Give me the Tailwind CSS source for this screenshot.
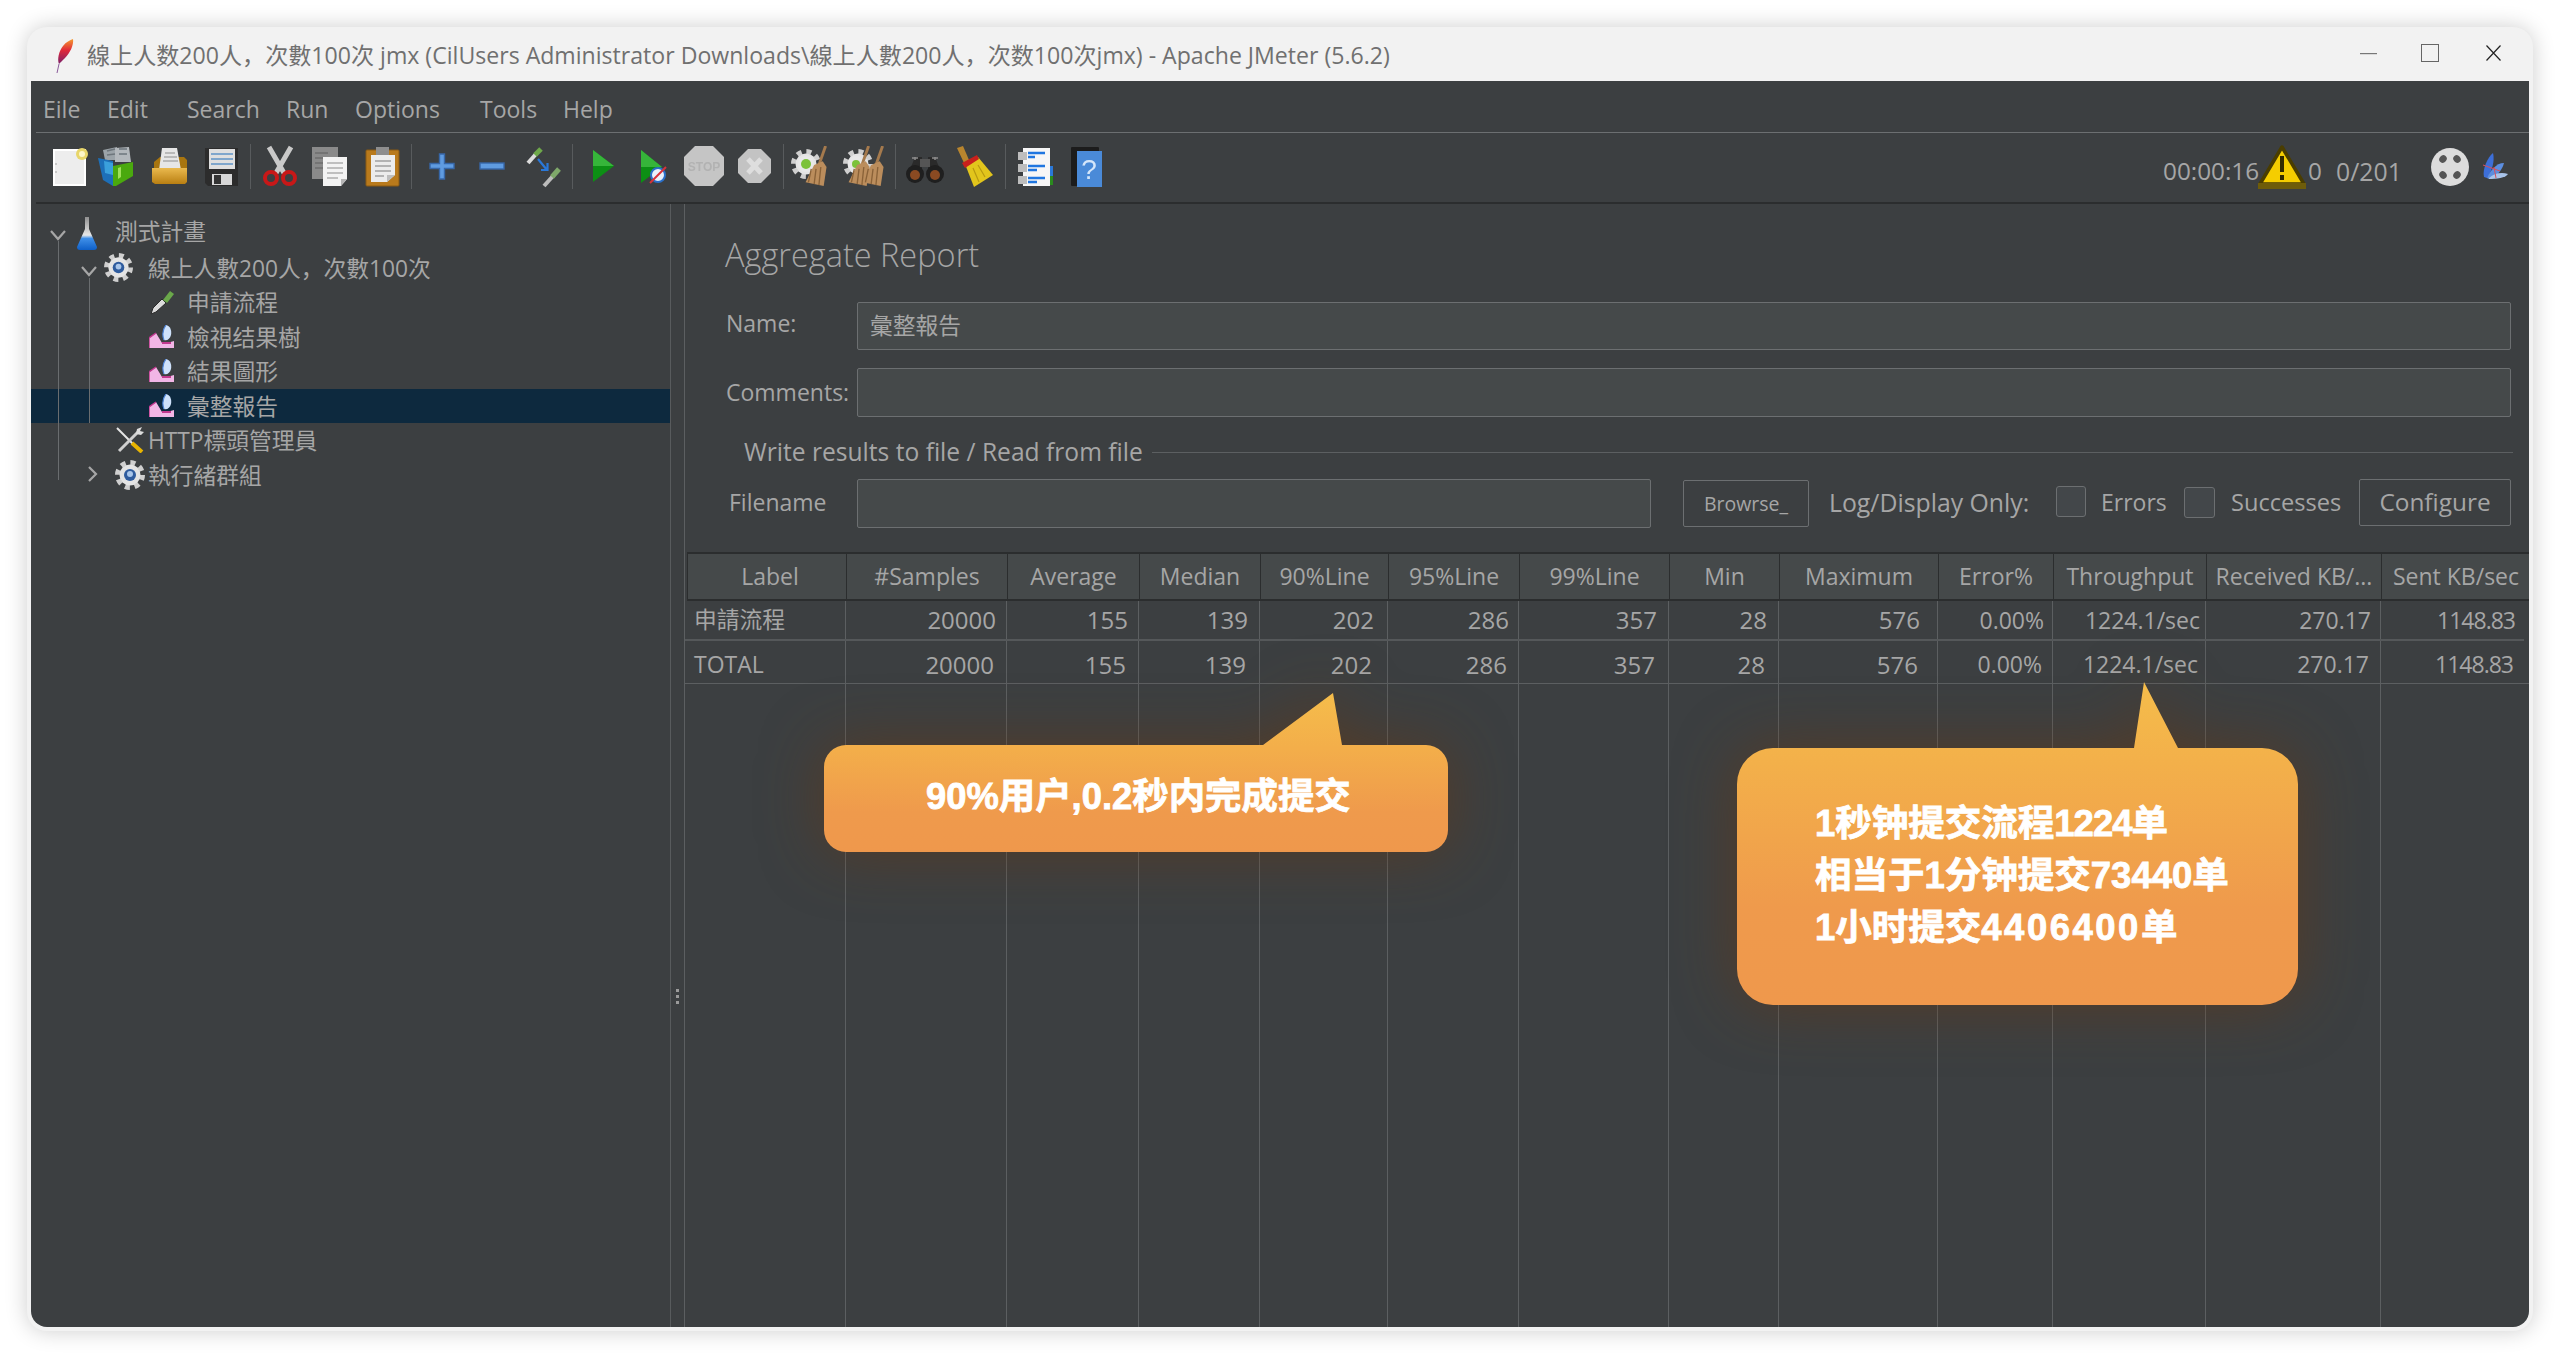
<!DOCTYPE html>
<html lang="zh-Hans">
<head>
  <meta charset="UTF-8">
  <title>Apache JMeter</title>
  <script src="https://cdn.jsdelivr.net/npm/@tailwindcss/browser@4"></script>
</head>
<body class="relative w-[2560px] h-[1360px] overflow-hidden bg-white font-['Open_Sans','Noto_Sans_CJK_SC',sans-serif]">

  <!-- shared icons -->
  <svg class="absolute w-0 h-0">
    <symbol id="gear" viewBox="0 0 30 30">
      <circle cx="15" cy="15" r="12.5" fill="none" stroke="#cfcfcf" stroke-width="5" stroke-dasharray="5 4.82"/>
      <circle cx="15" cy="15" r="10.5" fill="#e4e4e4"/>
      <circle cx="15" cy="15" r="6" fill="#2f5c9e"/>
      <circle cx="15" cy="14" r="3" fill="#a9c6ea"/>
    </symbol>
    <symbol id="chart" viewBox="0 0 25 24">
      <path d="M0 23V13L7 8L10 13L13 18H18L25 16V23Z" fill="#f2b6e6"/>
      <path d="M0 23V13L7 8" fill="none" stroke="#c2388f" stroke-width="1.5"/>
      <path d="M13 18H22" stroke="#c2388f" stroke-width="2"/>
      <path d="M17 0C21 1 23 5 22 10C21 14 18 16 15 15C13 10 14 4 17 0Z" fill="#cfe2fb"/>
      <path d="M17 0C14 4 13 10 15 15" fill="none" stroke="#4d84d8" stroke-width="1.2"/>
    </symbol>
    <symbol id="broom" viewBox="0 0 24 44">
      <path d="M21 0L14 20" stroke="#a57a4d" stroke-width="3"/>
      <path d="M9 20L18 16L22 22L19 42L0 38Z" fill="#bb8d5c"/>
      <path d="M6 24L3 38M11 24L9 40M16 22L14 41" stroke="#8a6238" stroke-width="1.4"/>
    </symbol>
    <linearGradient id="call1" gradientUnits="userSpaceOnUse" x1="0" y1="0" x2="0" y2="159">
      <stop offset="0" stop-color="#f5bd4b"/><stop offset="0.35" stop-color="#f3ae4a"/><stop offset="0.75" stop-color="#ef9a4c"/><stop offset="1" stop-color="#ef984c"/>
    </linearGradient>
    <linearGradient id="call2" gradientUnits="userSpaceOnUse" x1="0" y1="0" x2="0" y2="323">
      <stop offset="0" stop-color="#f5bd4b"/><stop offset="0.25" stop-color="#f3b04a"/><stop offset="0.7" stop-color="#ef9a4c"/><stop offset="1" stop-color="#ef984c"/>
    </linearGradient>
    <linearGradient id="plume" x1="0" y1="0" x2="0" y2="1">
      <stop offset="0" stop-color="#f59a2e"/><stop offset="0.45" stop-color="#e0293a"/><stop offset="1" stop-color="#7a1f6a"/>
    </linearGradient>
    <linearGradient id="folder" x1="0" y1="0" x2="0" y2="1">
      <stop offset="0" stop-color="#eab94e"/><stop offset="1" stop-color="#b97f12"/>
    </linearGradient>
    <linearGradient id="flask" x1="0" y1="0" x2="0" y2="1">
      <stop offset="0" stop-color="#8f8f8f"/><stop offset="0.55" stop-color="#e8e8e8"/><stop offset="0.65" stop-color="#3f8fe8"/><stop offset="1" stop-color="#0e5fc8"/>
    </linearGradient>
  </svg>

  <!-- window -->
  <div class="absolute left-[27px] top-[27px] w-[2506px] h-[1304px] rounded-[20px] bg-[#f2f2f2] px-[4px] pb-[4px] shadow-[0_0_22px_rgba(0,0,0,0.2)] flex flex-col">

    <!-- title bar -->
    <div class="h-[54px] shrink-0 flex items-center pl-[25px] pr-[28px] pt-[3px] text-[23.1px] text-[#707070] whitespace-nowrap">
      <svg class="w-[18px] h-[34px] shrink-0" viewBox="0 0 18 34">
        <path d="M17 0C18 6 14 14 9 19C6 22 4 24 3 25C1 20 3 12 7 7C10 3 14 1 17 0Z" fill="url(#plume)"/>
        <path d="M3 25L1 34" stroke="#8a5a9a" stroke-width="1"/>
      </svg>
      <span class="ml-[13px]">線上人数200人，次數100次 jmx (CilUsers Administrator Downloads\線上人數200人，次数100次jmx) - Apache JMeter (5.6.2)</span>
      <svg class="ml-auto -mt-[3px] w-[17px] h-[2px]" viewBox="0 0 17 2"><rect width="17" height="1.2" fill="#777"/></svg>
      <svg class="ml-[44px] -mt-[6px] w-[18px] h-[18px]" viewBox="0 0 18 18"><rect x="0.5" y="0.5" width="17" height="17" fill="none" stroke="#666" stroke-width="1"/></svg>
      <svg class="ml-[47px] -mt-[6px] w-[15px] h-[16px]" viewBox="0 0 15 16"><path d="M0.5 0.5L14.5 15.5M14.5 0.5L0.5 15.5" stroke="#222" stroke-width="1.2"/></svg>
    </div>

    <!-- dark body -->
    <div class="flex-1 min-h-0 bg-[#3c3f41] rounded-b-[16px] flex flex-col text-[#a6a6a6] text-[23px]">

      <!-- menu -->
      <div class="h-[52px] shrink-0 ml-[5px] pl-[7px] pt-[5px] flex items-center border-b border-[#6c6f71] whitespace-nowrap">
        <span class="w-[64px]">Eile</span>
        <span class="w-[80px]">Edit</span>
        <span class="w-[99px]">Search</span>
        <span class="w-[69px]">Run</span>
        <span class="w-[125px]">Options</span>
        <span class="w-[83px]">Tools</span>
        <span>Help</span>
      </div>

      <!-- toolbar -->
      <div class="h-[71px] shrink-0 ml-[5px] pl-[11px] pr-[21px] pt-[11px] flex items-start border-b-2 border-[#2b2d2e] [&>svg]:blur-[0.5px] [&>div>svg]:blur-[0.5px]">
        <svg class="w-[44px] h-[44px]" viewBox="0 0 44 44">
          <rect x="7" y="6" width="31" height="35" fill="#ededed" stroke="#fff" stroke-width="2"/>
          <circle cx="9" cy="20" r="0.8" fill="#999"/><circle cx="9" cy="28" r="0.8" fill="#999"/>
          <circle cx="35" cy="10" r="6" fill="#e8d66a"/><circle cx="35" cy="10" r="3" fill="#fdf6c8"/>
        </svg>
        <svg class="ml-[4px] w-[44px] h-[44px]" viewBox="0 0 44 44">
          <path d="M8 6L22 3V16L10 16Z" fill="#9ba3a8"/><path d="M20 4L34 3L36 18L20 18Z" fill="#b3b8bc"/>
          <path d="M12 7L20 5M24 5L32 5M12 11L20 10M24 10L32 10" stroke="#6e767c" stroke-width="1.6"/>
          <path d="M3 14L18 17V42L8 36Z" fill="#1d6fb8"/><path d="M9 17L18 19V31L10 29Z" fill="#3aa0dc"/>
          <path d="M18 22L38 18V32L21 42H18Z" fill="#4aa90e"/><path d="M23 24L26 23V33L23 35Z" fill="#9fe05a"/>
        </svg>
        <svg class="ml-[9px] w-[44px] h-[44px]" viewBox="0 0 44 44">
          <path d="M6 18L12 13H36L39 16V30H6Z" fill="#a8750f"/>
          <path d="M14 4H29L33 26H11Z" fill="#e6e6e6"/><path d="M17 9H27M16 13H29M15 17H30" stroke="#aaa" stroke-width="1.4"/>
          <path d="M4 24H39V38L37 40H7L4 38Z" fill="url(#folder)"/>
        </svg>
        <svg class="ml-[7px] w-[44px] h-[44px]" viewBox="0 0 44 44">
          <path d="M6 4H39V42H9L6 39Z" fill="#2c2c2c"/>
          <rect x="10" y="5" width="26" height="20" fill="#dfdfdf"/>
          <path d="M12 10H34M12 15H34M12 20H34" stroke="#7fa6cc" stroke-width="2"/>
          <rect x="13" y="30" width="20" height="11" fill="#d8d8d8"/><rect x="15" y="31" width="7" height="9" fill="#333"/>
        </svg>
        <div class="ml-[7px] w-[1px] h-[45px] bg-[#585b5d]"></div>
        <svg class="ml-[7px] w-[44px] h-[44px]" viewBox="0 0 44 44">
          <path d="M11 3L26 29M33 3L18 29" stroke="#c9c9c9" stroke-width="5"/>
          <circle cx="13" cy="34" r="6" fill="none" stroke="#c81818" stroke-width="4"/>
          <circle cx="31" cy="34" r="6" fill="none" stroke="#c81818" stroke-width="4"/>
        </svg>
        <svg class="ml-[6px] w-[44px] h-[44px]" viewBox="0 0 44 44">
          <rect x="4" y="3" width="26" height="32" fill="#8a8a8a"/>
          <path d="M7 9H20M7 14H20M7 19H20M7 24H20" stroke="#6e6e6e" stroke-width="1.5"/>
          <path d="M15 13H39V35L33 42H15Z" fill="#f3f3f3"/>
          <path d="M19 19H35M19 24H35M19 29H35M19 34H30" stroke="#aeaeae" stroke-width="1.5"/>
          <path d="M33 42V35H39Z" fill="#b5b5b5"/>
        </svg>
        <svg class="ml-[8px] w-[44px] h-[44px]" viewBox="0 0 44 44">
          <rect x="6" y="6" width="33" height="36" rx="1" fill="#b97a1c" stroke="#8b5a12"/>
          <path d="M11 11H35V31L27 38H11Z" fill="#ececec"/>
          <path d="M15 17H31M15 22H31M15 27H31M15 32H24" stroke="#a0a0a0" stroke-width="1.5"/>
          <path d="M27 38V31H35Z" fill="#bdbdbd"/>
          <rect x="16" y="3" width="13" height="8" fill="#8e8e8e"/>
        </svg>
        <div class="ml-[7px] w-[1px] h-[45px] bg-[#585b5d]"></div>
        <svg class="ml-[8px] w-[44px] h-[44px]" viewBox="0 0 44 44">
          <path d="M19.5 10H24.5V19.5H34V24.5H24.5V35H19.5V24.5H10V19.5H19.5Z" fill="#5f9be0" stroke="#3767a8" stroke-width="1.4"/>
        </svg>
        <svg class="ml-[6px] w-[44px] h-[44px]" viewBox="0 0 44 44">
          <rect x="10" y="19" width="24" height="6" fill="#5f9be0" stroke="#3767a8" stroke-width="1.4"/>
        </svg>
        <svg class="ml-[6px] w-[44px] h-[44px]" viewBox="0 0 44 44">
          <path d="M8 19L16 10" stroke="#dcdcdc" stroke-width="4"/><path d="M15 11L21 5" stroke="#6ea84a" stroke-width="5"/>
          <path d="M18 15L27 26M21 26H27.5V19" fill="none" stroke="#2a78d8" stroke-width="2.2"/>
          <path d="M24 42L33 32" stroke="#bcbcbc" stroke-width="4"/><path d="M32 33L39 25" stroke="#7fa86a" stroke-width="5"/>
        </svg>
        <div class="ml-[8px] w-[1px] h-[45px] bg-[#585b5d]"></div>
        <svg class="ml-[8px] w-[44px] h-[44px]" viewBox="0 0 44 44">
          <path d="M12 6L33 22L12 38Z" fill="#0c8f14"/><path d="M12 6L33 22H12Z" fill="#36b53a"/>
        </svg>
        <svg class="ml-[7px] w-[44px] h-[44px]" viewBox="0 0 44 44">
          <path d="M9 6L30 23L9 39Z" fill="#0c8f14"/><path d="M9 6L30 23H9Z" fill="#36b53a"/>
          <circle cx="26" cy="31" r="7" fill="#e8f1fb" stroke="#2a6fc8" stroke-width="2"/>
          <path d="M18 39L34 23" stroke="#d8323a" stroke-width="2"/>
        </svg>
        <svg class="ml-[5px] w-[44px] h-[44px]" viewBox="0 0 44 44">
          <path d="M14 2H32L43 13V31L32 42H14L3 31V13Z" fill="#c5c5c5"/>
          <text x="23" y="27" text-anchor="middle" font-family="Liberation Sans" font-weight="700" font-size="12" fill="#b2b2b2">STOP</text>
        </svg>
        <svg class="ml-[7px] w-[44px] h-[44px]" viewBox="0 0 44 44">
          <path d="M16 5H29L39 15V29L29 39H16L6 29V15Z" fill="#c3c3c3"/>
          <path d="M16 15L29 29M29 15L16 29" stroke="#dedede" stroke-width="5"/>
        </svg>
        <div class="ml-[7px] w-[1px] h-[45px] bg-[#585b5d]"></div>
        <svg class="ml-[6px] w-[44px] h-[44px]" viewBox="0 0 44 44">
          <use href="#gear" x="1" y="5" width="30" height="30"/>
          <circle cx="16" cy="20" r="8" fill="#e8e8e8"/><circle cx="16" cy="20" r="5" fill="#7cc23a"/>
          <use href="#broom" x="15" y="2" width="24" height="42"/>
        </svg>
        <svg class="ml-[8px] w-[44px] h-[44px]" viewBox="0 0 44 44">
          <use href="#gear" x="1" y="5" width="30" height="30"/>
          <circle cx="14" cy="20" r="8" fill="#e8e8e8"/><circle cx="14" cy="20" r="4" fill="#7cc23a"/>
          <use href="#broom" x="6" y="2" width="24" height="42"/>
          <use href="#broom" x="20" y="2" width="24" height="42"/>
        </svg>
        <div class="ml-[9px] w-[1px] h-[45px] bg-[#585b5d]"></div>
        <svg class="ml-[7px] w-[44px] h-[44px]" viewBox="0 0 44 44">
          <path d="M6 28L12 13H19V28ZM25 28V13H32L38 28Z" fill="#2a2a2a"/><rect x="17" y="15" width="10" height="8" fill="#555"/>
          <circle cx="12" cy="30" r="9" fill="#1f1f1f"/><circle cx="32" cy="30" r="9" fill="#1f1f1f"/>
          <circle cx="12" cy="31" r="5" fill="#8a4a22"/><circle cx="32" cy="31" r="5" fill="#8a4a22"/>
          <path d="M12 13V16M32 13V16M9 14H15M29 14H35" stroke="#8c8c8c" stroke-width="1.5"/>
        </svg>
        <svg class="ml-[5px] w-[44px] h-[44px]" viewBox="0 0 44 44">
          <path d="M5 4L11 2L17 16L12 19Z" fill="#b8852e"/>
          <path d="M13 20L26 13L41 31L22 43Z" fill="#e2c51c"/>
          <path d="M21 24L27 38M26 21L33 33" stroke="#b89a10" stroke-width="1.2"/>
          <path d="M10 19L25 11L27 15L13 24Z" fill="#c8201c"/>
        </svg>
        <div class="ml-[9px] w-[1px] h-[45px] bg-[#585b5d]"></div>
        <svg class="ml-[7px] w-[44px] h-[44px]" viewBox="0 0 44 44">
          <rect x="36" y="22" width="4" height="10" fill="#2a78d8"/><rect x="36" y="32" width="4" height="9" fill="#2a8a1e"/>
          <rect x="10" y="4" width="27" height="38" fill="#f6f6f6"/>
          <path d="M15 9H32M15 13H22M15 22H32M15 26H24M15 34H32M15 38H24" stroke="#1f76e0" stroke-width="2.4"/>
          <rect x="5" y="8" width="9" height="8" fill="#bdbdbd"/><rect x="5" y="20" width="9" height="8" fill="#bdbdbd"/><rect x="5" y="32" width="9" height="8" fill="#bdbdbd"/>
        </svg>
        <svg class="ml-[7px] w-[44px] h-[44px]" viewBox="0 0 44 44">
          <rect x="7" y="3" width="28" height="39" rx="1" fill="#1c1c1c"/>
          <rect x="13" y="7" width="25" height="36" fill="#4a8ad8"/>
          <text x="25" y="35" text-anchor="middle" font-family="Liberation Sans" font-size="28" fill="#d5e6fa">?</text>
        </svg>

        <!-- status -->
        <div class="ml-auto flex items-start">
          <span class="mt-[9px] w-[94px] text-[24.3px]">00:00:16</span>
          <svg class="w-[50px] h-[46px]" viewBox="0 0 50 46">
            <path d="M25 3L47 40H3Z" fill="#f5cd00" stroke="#4a3d00" stroke-width="3.5" stroke-linejoin="round"/>
            <rect x="1" y="39" width="48" height="6" fill="#6e5c0a"/>
            <path d="M25 12V28" stroke="#332b00" stroke-width="4"/><rect x="23" y="31" width="4" height="5" fill="#332b00"/>
          </svg>
          <span class="mt-[9px] ml-[1px] w-[28px] text-[24.3px]">0</span>
          <span class="mt-[9px] w-[94px] text-[24.8px]">0/201</span>
          <svg class="w-[40px] h-[40px] mt-[3px]" viewBox="0 0 40 40">
            <circle cx="20" cy="20" r="19" fill="#dcdcdc"/>
            <ellipse cx="13" cy="12" rx="3.5" ry="4" fill="#555" transform="rotate(40 13 12)"/><ellipse cx="27" cy="12" rx="3.5" ry="4" fill="#555" transform="rotate(-40 27 12)"/>
            <ellipse cx="13" cy="28" rx="3.5" ry="4" fill="#555" transform="rotate(-40 13 28)"/><ellipse cx="27" cy="28" rx="3.5" ry="4" fill="#555" transform="rotate(40 27 28)"/>
          </svg>
          <svg class="ml-[12px] w-[26px] h-[26px] mt-[9px]" viewBox="0 0 26 26">
            <path d="M2 24C0 16 6 4 11 0C13 8 10 18 5 25Z" fill="#3d6fd8"/>
            <path d="M5 25C8 18 14 10 22 10C20 18 14 24 7 26Z" fill="#5c8ee0"/>
            <path d="M7 25C12 20 20 19 26 21C24 25 14 26 7 26Z" fill="#a9c4ea"/>
            <path d="M1 12L18 18M12 14L14 25" stroke="#d8505a" stroke-width="1"/>
          </svg>
        </div>
      </div>

      <!-- main -->
      <div class="flex-1 min-h-0 flex">
        <!-- tree -->
        <div class="relative w-[640px] shrink-0 border-r border-[#585b5d] pt-[12px] [&_svg]:shrink-0 [&_span]:mt-[2px] whitespace-nowrap text-[22.75px]">
          <div class="absolute left-[26.5px] top-[37px] h-[239px] w-px bg-[#6a6d6f]"></div>
          <div class="absolute left-[58px] top-[74px] h-[145px] w-px bg-[#6a6d6f]"></div>

          <div class="h-[34.5px] pl-[19px] flex items-center">
            <svg class="w-[16px] h-[12px] mt-[4px]" viewBox="0 0 16 12"><path d="M1 2L8 10L15 2" fill="none" stroke="#a6a6a6" stroke-width="2.2"/></svg>
            <svg class="ml-[11px] w-[20px] h-[33px]" viewBox="0 0 20 33"><path d="M8 0H12V12L20 30C20 32 19 33 17 33H3C1 33 0 32 0 30L8 12Z" fill="url(#flask)"/></svg>
            <span class="ml-[18px] !-mt-[2px]">測式計畫</span>
          </div>
          <div class="h-[34.5px] pl-[50px] flex items-center">
            <svg class="w-[16px] h-[12px] mt-[6px]" viewBox="0 0 16 12"><path d="M1 2L8 10L15 2" fill="none" stroke="#a6a6a6" stroke-width="2.2"/></svg>
            <svg class="ml-[7px] w-[29px] h-[29px]"><use href="#gear"/></svg>
            <span class="ml-[15px]">線上人數200人，次數100次</span>
          </div>
          <div class="h-[34.5px] pl-[118px] flex items-center">
            <svg class="w-[25px] h-[25px]" viewBox="0 0 25 25">
              <path d="M2 24L4 18L13 9L17 13L7 22Z" fill="#dcdcdc" stroke="#2a2a2a" stroke-width="1"/>
              <path d="M14 10L21 1L25 4L18 13Z" fill="#6aa84a"/>
            </svg>
            <span class="ml-[13px]">申請流程</span>
          </div>
          <div class="h-[34.5px] pl-[118px] flex items-center">
            <svg class="w-[25px] h-[24px]"><use href="#chart"/></svg>
            <span class="ml-[13px]">檢視结果樹</span>
          </div>
          <div class="h-[34.5px] pl-[118px] flex items-center">
            <svg class="w-[25px] h-[24px]"><use href="#chart"/></svg>
            <span class="ml-[13px]">結果圖形</span>
          </div>
          <div class="h-[34.5px] pl-[118px] flex items-center bg-[#0d293e]">
            <svg class="w-[25px] h-[24px]"><use href="#chart"/></svg>
            <span class="ml-[13px]">彙整報告</span>
          </div>
          <div class="h-[34.5px] pl-[85px] flex items-center">
            <svg class="w-[28px] h-[26px]" viewBox="0 0 28 26">
              <path d="M1 1L25 25" stroke="#e6e6e6" stroke-width="2"/><path d="M16 16L26 25" stroke="#e8b400" stroke-width="4"/>
              <path d="M3 24L22 5" stroke="#cfcfcf" stroke-width="3"/>
              <path d="M20 7L21 2L26 0L24 4L28 5L25 8Z" fill="#dcdcdc"/>
            </svg>
            <span class="ml-[4px]">HTTP標頭管理員</span>
          </div>
          <div class="h-[34.5px] pl-[53px] flex items-center">
            <svg class="w-[16px] h-[18px] -mt-[2px]" viewBox="0 0 16 18"><path d="M5 2L12 9L5 16" fill="none" stroke="#a6a6a6" stroke-width="2.2"/></svg>
            <svg class="ml-[15px] w-[30px] h-[30px]"><use href="#gear"/></svg>
            <span class="ml-[3px]">執行緒群組</span>
          </div>
        </div>

        <!-- splitter -->
        <div class="w-[13px] shrink-0 flex flex-col items-center pt-[785px] gap-[3px]">
          <div class="w-[3px] h-[3px] bg-[#9a9a9a]"></div>
          <div class="w-[3px] h-[3px] bg-[#9a9a9a]"></div>
          <div class="w-[3px] h-[3px] bg-[#9a9a9a]"></div>
        </div>

        <!-- report panel -->
        <div class="flex-1 min-w-0 flex flex-col border-l border-[#5c5f61] whitespace-nowrap">
          <div class="h-[40px] mt-[31px] ml-[40px] flex items-center text-[32.5px] font-light">Aggregate Report</div>

          <div class="mt-[27px] h-[48px] pl-[41px] pr-[18px] flex">
            <span class="w-[131px] flex items-center -mt-[6px]">Name:</span>
            <div class="flex-1 px-[12px] flex items-center bg-[#45494a] border border-[#6c6f71] rounded-[2px] text-[22.75px]">彙整報告</div>
          </div>
          <div class="mt-[18px] h-[49px] pl-[41px] pr-[18px] flex">
            <span class="w-[131px] flex items-center">Comments:</span>
            <div class="flex-1 bg-[#45494a] border border-[#6c6f71] rounded-[2px]"></div>
          </div>

          <div class="mt-[18px] h-[34px] pl-[59px] pr-[16px] flex items-center">
            <span class="text-[24.6px]">Write results to file / Read from file</span>
            <div class="flex-1 ml-[9px] h-px bg-[#5c5f61]"></div>
          </div>

          <div class="mt-[10px] h-[49px] pl-[44px] flex items-start">
            <span class="w-[128px] h-[47px] flex items-center">Filename</span>
            <div class="w-[794px] h-[49px] bg-[#45494a] border border-[#6c6f71] rounded-[2px]"></div>
            <div class="ml-[32px] mt-[1px] w-[126px] h-[47px] flex items-center justify-center border border-[#6c6f71] rounded-[2px] text-[19.5px]">Browrse_</div>
            <span class="ml-[20px] w-[227px] h-[47px] flex items-center text-[24.8px]">Log/Display Only:</span>
            <div class="mt-[7px] w-[30px] h-[31px] bg-[#43474a] border border-[#6c6f71] rounded-[3px]"></div>
            <span class="ml-[15px] w-[83px] h-[47px] flex items-center">Errors</span>
            <div class="mt-[8px] w-[31px] h-[31px] bg-[#43474a] border border-[#6c6f71] rounded-[3px]"></div>
            <span class="ml-[16px] w-[128px] h-[47px] flex items-center text-[23.6px]">Successes</span>
            <div class="w-[152px] h-[47px] flex items-center justify-center border border-[#6c6f71] rounded-[2px] text-[24.4px]">Configure</div>
          </div>

          <!-- table -->
          <div class="mt-[24px] flex-1 min-h-0 flex flex-col overflow-hidden">
            <div class="ml-[2px] h-[49px] shrink-0 grid grid-cols-[159px_161px_132px_121px_128px_131px_150px_110px_159px_115px_153px_175px_149px] bg-[#45494a] border-y-2 border-[#2b2d2e] border-l border-l-[#2b2d2e] text-center [&>div]:border-r [&>div]:border-[#2b2d2e] [&>div]:flex [&>div]:items-center [&>div]:justify-center">
              <div class="pl-[6px]">Label</div><div>#Samples</div><div>Average</div><div>Median</div><div>90%Line</div><div>95%Line</div><div>99%Line</div><div>Min</div><div>Maximum</div><div>Error%</div><div>Throughput</div><div>Received KB/...</div><div>Sent KB/sec</div>
            </div>
            <div class="h-[40px] shrink-0 grid grid-cols-[161px_161px_132px_121px_128px_131px_150px_110px_159px_115px_153px_175px_149px] text-[24px] border-b-2 border-[#55585a] mr-[5px] [&>div]:border-r [&>div]:border-[#5c5f61] [&>div]:flex [&>div]:items-center [&>div]:justify-end">
              <div class="!justify-start pl-[9px] text-[22.75px]">申請流程</div>
              <div class="pr-[10px]">20000</div><div class="pr-[10px]">155</div><div class="pr-[11px]">139</div><div class="pr-[13px]">202</div><div class="pr-[9px]">286</div><div class="pr-[11px]">357</div><div class="pr-[11px]">28</div><div class="pr-[17px]">576</div><div class="pr-[8px] text-[23px]">0.00%</div><div class="pr-[5px] text-[23px]">1224.1/sec</div><div class="pr-[9px] text-[23px]">270.17</div><div class="pr-[14px] text-[23px] tracking-[-1px]">1148.83</div>
            </div>
            <div class="h-[43px] shrink-0 grid grid-cols-[161px_161px_132px_121px_128px_131px_150px_110px_159px_115px_153px_175px_149px] text-[24px] border-b border-[#5c5f61] [&>div]:border-r [&>div]:border-[#5c5f61] [&>div]:flex [&>div]:items-center [&>div]:justify-end [&>div]:pt-[5px]">
              <div class="!justify-start pl-[9px] text-[23px]">TOTAL</div>
              <div class="pr-[12px]">20000</div><div class="pr-[12px]">155</div><div class="pr-[13px]">139</div><div class="pr-[15px]">202</div><div class="pr-[11px]">286</div><div class="pr-[13px]">357</div><div class="pr-[13px]">28</div><div class="pr-[19px]">576</div><div class="pr-[10px] text-[23px]">0.00%</div><div class="pr-[7px] text-[23px]">1224.1/sec</div><div class="pr-[11px] text-[23px]">270.17</div><div class="pr-[16px] text-[23px] tracking-[-1px]">1148.83</div>
            </div>
            <div class="flex-1 grid grid-cols-[161px_161px_132px_121px_128px_131px_150px_110px_159px_115px_153px_175px_149px] [&>div]:border-r [&>div]:border-[#5c5f61]">
              <div></div><div></div><div></div><div></div><div></div><div></div><div></div><div></div><div></div><div></div><div></div><div></div><div class="!border-r-0"></div>
            </div>
          </div>
        </div>
      </div>
    </div>
  </div>

  <!-- callouts -->
  <div class="absolute left-[824px] top-[693px] w-[624px] h-[159px] text-white font-bold text-[36.4px] [-webkit-text-stroke:0.8px_white] font-['Liberation_Sans','Noto_Sans_CJK_SC',sans-serif]">
    <svg class="absolute inset-0 w-[624px] h-[159px] overflow-visible drop-shadow-[0_0_30px_rgba(110,55,10,0.5)]" viewBox="0 0 624 159">
      <path d="M22 52H439L509 0L518 52H602A22 22 0 0 1 624 74V137A22 22 0 0 1 602 159H22A22 22 0 0 1 0 137V74A22 22 0 0 1 22 52Z" fill="url(#call1)"/>
    </svg>
    <div class="relative pt-[80px] pl-[102px] leading-[48px] whitespace-nowrap">90%用户,0.2秒内完成提交</div>
  </div>

  <div class="absolute left-[1737px] top-[682px] w-[561px] h-[323px] text-white font-bold text-[36.5px] [-webkit-text-stroke:0.8px_white] font-['Liberation_Sans','Noto_Sans_CJK_SC',sans-serif]">
    <svg class="absolute inset-0 w-[561px] h-[323px] overflow-visible drop-shadow-[0_0_30px_rgba(110,55,10,0.5)]" viewBox="0 0 561 323">
      <path d="M36 66H397L407 0L441 66H525A36 36 0 0 1 561 102V287A36 36 0 0 1 525 323H36A36 36 0 0 1 0 287V102A36 36 0 0 1 36 66Z" fill="url(#call2)"/>
    </svg>
    <div class="relative pt-[116px] pl-[78px] leading-[52px] whitespace-nowrap">
      <div>1秒钟提交流程<span class="tracking-[-1px]">1224</span>单</div>
      <div>相当于1分钟提交73440单</div>
      <div>1小时提交<span class="tracking-[2.5px]">4406400</span>单</div>
    </div>
  </div>
</body>
</html>
